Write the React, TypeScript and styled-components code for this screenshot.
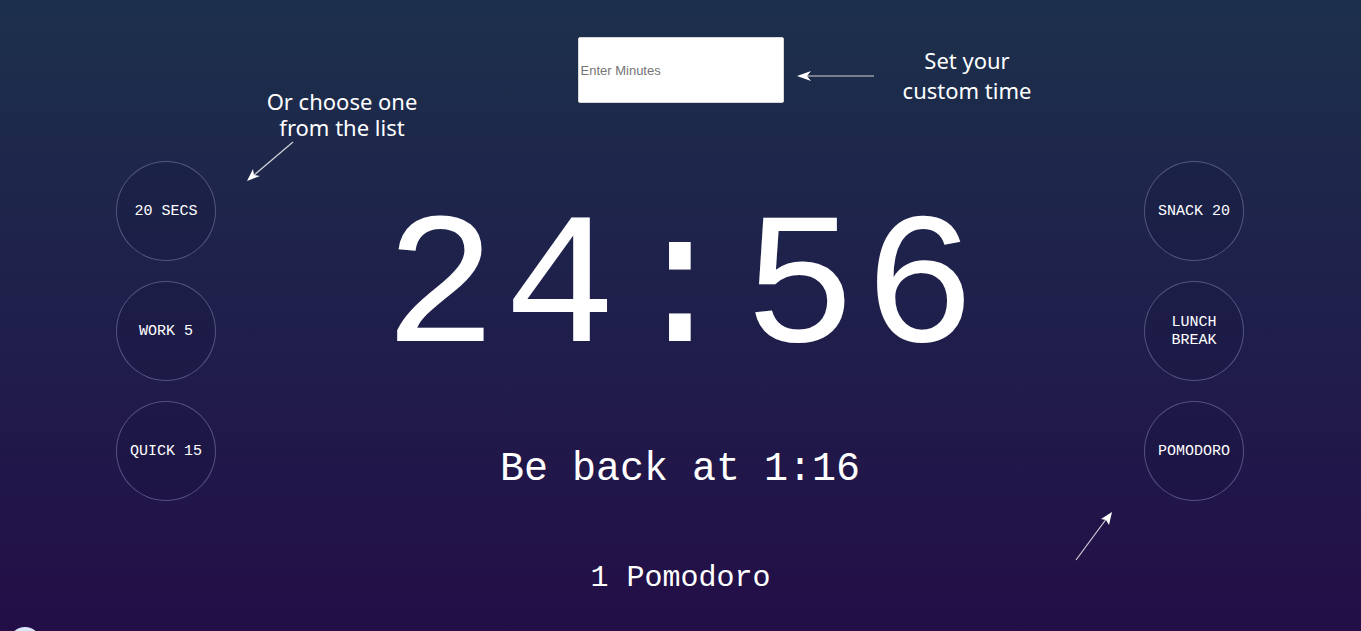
import React from "react";
import styled, { createGlobalStyle } from "styled-components";

const Global = createGlobalStyle`
  html, body { margin: 0; padding: 0; height: 100%; }
  body { background: #230e47; overflow: hidden; }
  * { box-sizing: border-box; }
`;

const Page = styled.div`
  position: relative;
  width: 100%;
  height: 631px;
  overflow: hidden;
  background: linear-gradient(to bottom, #1c304b 0%, #1f1f4b 50%, #230e47 100%);
  font-family: "Liberation Mono", "Courier New", monospace;
  color: #ffffff;
  display: flex;
  flex-direction: column;
  align-items: stretch;
  padding-top: 37px;
`;

const InputRow = styled.div`
  display: flex;
  justify-content: center;
`;

const MinutesInput = styled.input`
  width: 206px;
  height: 66px;
  border: 1px solid #d8d8d8;
  border-radius: 2px;
  background: #ffffff;
  padding: 0 2px;
  font-family: "Liberation Sans", Arial, sans-serif;
  font-size: 13px;
  color: #333;
  outline: none;
  &::placeholder { color: #757575; }
`;

const Main = styled.div`
  display: grid;
  grid-template-columns: 100px 1fr 100px;
  padding: 0 117px 0 116px;
  margin-top: 58px;
`;

const Column = styled.div`
  display: flex;
  flex-direction: column;
  gap: 20px;
`;

const Preset = styled.button`
  width: 100px;
  height: 100px;
  border-radius: 50%;
  border: 1px solid rgba(150, 150, 200, 0.45);
  background: rgba(20, 20, 60, 0.25);
  color: #ffffff;
  font-family: "Liberation Mono", "Courier New", monospace;
  font-size: 15px;
  line-height: 18px;
  padding: 1px 0 0;
  cursor: pointer;
  display: flex;
  align-items: center;
  justify-content: center;
  text-align: center;
  white-space: pre;
`;

const Center = styled.div`
  display: flex;
  flex-direction: column;
  align-items: center;
`;

const Timer = styled.div`
  font-size: 188px;
  line-height: 200px;
  margin-top: 30px;
  letter-spacing: 7px;
  margin-right: -7px;
  white-space: pre;
`;

const BackAt = styled.div`
  font-size: 40px;
  line-height: 46px;
  margin-top: 56px;
  white-space: pre;
`;

const Count = styled.div`
  text-align: center;
  font-size: 30px;
  line-height: 34px;
  margin-top: 60px;
  white-space: pre;
`;

const Note = styled.div<{ $x: number; $y: number; $lh: number }>`
  position: absolute;
  left: ${(p) => p.$x}px;
  top: ${(p) => p.$y}px;
  transform: translateX(-50%);
  font-family: "Noto Sans", "DejaVu Sans", sans-serif;
  font-size: 22px;
  line-height: ${(p) => p.$lh}px;
  text-align: center;
  color: #ffffff;
  white-space: pre;
`;

const Overlay = styled.svg`
  position: absolute;
  left: 0;
  top: 0;
  width: 1361px;
  height: 631px;
  pointer-events: none;
`;

const Dot = styled.div`
  position: absolute;
  left: 9px;
  top: 627px;
  width: 32px;
  height: 32px;
  border-radius: 50%;
  background: #dbe6fb;
`;

const left = ["20 SECS", "WORK 5", "QUICK 15"];
const right = ["SNACK 20", "LUNCH\nBREAK", "POMODORO"];

export default function App() {
  return (
    <>
      <Global />
      <Page>
        <InputRow>
          <MinutesInput placeholder="Enter Minutes" />
        </InputRow>
        <Main>
          <Column>
            {left.map((l) => (
              <Preset key={l}>{l}</Preset>
            ))}
          </Column>
          <Center>
            <Timer>24:56</Timer>
            <BackAt>Be back at 1:16</BackAt>
          </Center>
          <Column>
            {right.map((l) => (
              <Preset key={l}>{l}</Preset>
            ))}
          </Column>
        </Main>
        <Count>1 Pomodoro</Count>
        <Note $x={967} $y={45} $lh={30}>{"Set your\ncustom time"}</Note>
        <Note $x={342} $y={88} $lh={26}>{"Or choose one\nfrom the list"}</Note>
        <Overlay viewBox="0 0 1361 631">
          <line x1="874" y1="76" x2="804" y2="76" stroke="#9a9aa6" strokeWidth="1.5" />
          <path d="M797 76 L811 71 L807 76 L811 81 Z" fill="#ffffff" />
          <line x1="293" y1="142" x2="253" y2="176" stroke="#d0d0d8" strokeWidth="1.2" />
          <path d="M247 181 L253 169 L254 175 L260 176 Z" fill="#ffffff" />
          <line x1="1076" y1="560" x2="1107" y2="518" stroke="#d0d0d8" strokeWidth="1.2" />
          <path d="M1112 512 L1109 525 L1106 520 L1101 519 Z" fill="#ffffff" />
        </Overlay>
        <Dot />
      </Page>
    </>
  );
}
